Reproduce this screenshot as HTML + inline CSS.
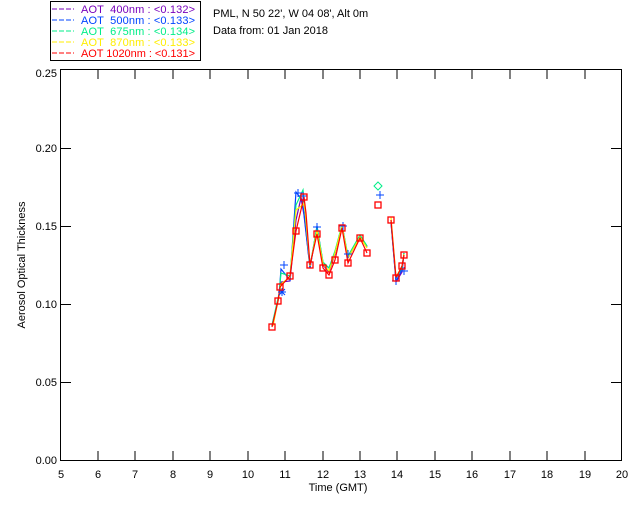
<!DOCTYPE html>
<html><head><style>
body{margin:0;background:#fff;width:640px;height:512px;overflow:hidden}
svg text{font-family:"Liberation Sans",sans-serif;font-size:11px}
</style></head><body>
<svg width="640" height="512" viewBox="0 0 640 512">
<rect x="50.5" y="1.5" width="150" height="59" fill="#fff" stroke="#000"/>
<g font-size="11">
<line x1="52" y1="9" x2="74" y2="9" stroke="#7700bb" stroke-dasharray="5,2"/><text x="81" y="13" fill="#7700bb" textLength="114" xml:space="preserve">AOT  400nm : &lt;0.132&gt;</text>
<line x1="52" y1="20" x2="74" y2="20" stroke="#0044ff" stroke-dasharray="5,2"/><text x="81" y="24" fill="#0044ff" textLength="114" xml:space="preserve">AOT  500nm : &lt;0.133&gt;</text>
<line x1="52" y1="31" x2="74" y2="31" stroke="#00ee88" stroke-dasharray="5,2"/><text x="81" y="35" fill="#00ee88" textLength="114" xml:space="preserve">AOT  675nm : &lt;0.134&gt;</text>
<line x1="52" y1="42" x2="74" y2="42" stroke="#ffee00" stroke-dasharray="5,2"/><text x="81" y="46" fill="#ffee00" textLength="114" xml:space="preserve">AOT  870nm : &lt;0.133&gt;</text>
<line x1="52" y1="53" x2="74" y2="53" stroke="#ff0000" stroke-dasharray="5,2"/><text x="81" y="57" fill="#ff0000" textLength="114" xml:space="preserve">AOT 1020nm : &lt;0.131&gt;</text>
</g>
<text x="213" y="17">PML, N 50 22', W 04 08', Alt 0m</text>
<text x="213" y="34">Data from: 01 Jan 2018</text>
<rect x="60.5" y="69.5" width="561" height="391" fill="none" stroke="#000"/>
<g stroke="#000">
<path d="M98 70v9M135 70v9M173 70v9M210 70v9M248 70v9M285 70v9M323 70v9M360 70v9M397 70v9M435 70v9M472 70v9M510 70v9M547 70v9M585 70v9
M98 460v-9M135 460v-9M173 460v-9M210 460v-9M248 460v-9M285 460v-9M323 460v-9M360 460v-9M397 460v-9M435 460v-9M472 460v-9M510 460v-9M547 460v-9M585 460v-9
M61 148.5h10M61 226.5h10M61 304.5h10M61 382.5h10M621 148.5h-10M621 226.5h-10M621 304.5h-10M621 382.5h-10"/>
</g>
<g text-anchor="end">
<text x="57" y="77">0.25</text><text x="57" y="152">0.20</text><text x="57" y="230">0.15</text><text x="57" y="308">0.10</text><text x="57" y="386">0.05</text><text x="57" y="464">0.00</text>
</g>
<g text-anchor="middle">
<text x="61" y="478">5</text><text x="98" y="478">6</text><text x="135" y="478">7</text><text x="173" y="478">8</text><text x="210" y="478">9</text><text x="248" y="478">10</text><text x="285" y="478">11</text><text x="323" y="478">12</text><text x="360" y="478">13</text><text x="397" y="478">14</text><text x="435" y="478">15</text><text x="472" y="478">16</text><text x="510" y="478">17</text><text x="547" y="478">18</text><text x="585" y="478">19</text><text x="622" y="478">20</text>
<text x="338" y="491">Time (GMT)</text>
<text transform="translate(25,265) rotate(-90)">Aerosol Optical Thickness</text>
</g>
<g fill="none" stroke-width="1.2">
<polyline stroke="#7700bb" points="272,326 279,296 281,282 290,281 296,220 301,198 304,215 310,268 317,228 323,265 329,272 335,254 342,225 348,258 360,236 367,247"/>
<polyline stroke="#7700bb" points="391,222 396,282 402,272 404,253"/>
<polyline stroke="#0044ff" points="272,326 279,296 281,269 290,280 296,192 302,200 304,213 310,268 317,226 323,263 329,268 335,253 342,225 348,258 360,237 367,246"/>
<polyline stroke="#0044ff" points="391,222 396,281 402,270 404,253"/>
<polyline stroke="#00ee88" points="272,325 279,294 281,273 290,276 296,205 303,190 305,211 310,266 317,227 323,262 329,268 335,251 342,225 348,256 360,235 367,246"/>
<polyline stroke="#00ee88" points="391,220 396,278 402,268 404,253"/>
<polyline stroke="#ffee00" points="273,326 279,296 281,284 290,277 296,210 304,204 305,210 310,266 317,230 323,264 329,271 335,253 342,226 348,258 360,237 367,248"/>
<polyline stroke="#ffee00" points="391,217 396,277 402,266 404,254"/>
<polyline stroke="#ff0000" points="272,327 278,301 280,287 290,276 296,231 304,197 306,213 310,265 317,234 323,268 329,275 335,260 342,228 348,263 360,238 367,253"/>
<polyline stroke="#ff0000" points="391,220 396,278 402,266 404,255"/>
</g>
<g fill="none" stroke="#0044ff">
<path d="M278 292h8M282 288v8M279 289l6 6M285 289l-6 6 M280 265h8M284 261v8M294 193h8M298 189v8M299 196h8M303 192v8M313 227h8M317 223v8M339 226h8M343 222v8M344 254h8M348 250v8M376 195h8M380 191v8M392 281h8M396 277v8M400 271h8M404 267v8"/>
</g>
<path d="M378 182l4 4-4 4-4-4z" fill="none" stroke="#00ee88"/>
<g fill="none" stroke="#ff0000" stroke-width="1.3">
<rect x="269" y="324" width="6" height="6"/><rect x="275" y="298" width="6" height="6"/><rect x="277" y="284" width="6" height="6"/><rect x="287" y="273" width="6" height="6"/><rect x="293" y="228" width="6" height="6"/><rect x="301" y="194" width="6" height="6"/><rect x="307" y="262" width="6" height="6"/><rect x="314" y="231" width="6" height="6"/><rect x="320" y="265" width="6" height="6"/><rect x="326" y="272" width="6" height="6"/><rect x="332" y="257" width="6" height="6"/><rect x="339" y="225" width="6" height="6"/><rect x="345" y="260" width="6" height="6"/><rect x="357" y="235" width="6" height="6"/><rect x="364" y="250" width="6" height="6"/><rect x="375" y="202" width="6" height="6"/><rect x="388" y="217" width="6" height="6"/><rect x="393" y="275" width="6" height="6"/><rect x="399" y="263" width="6" height="6"/><rect x="401" y="252" width="6" height="6"/>
</g>
</svg>
</body></html>
